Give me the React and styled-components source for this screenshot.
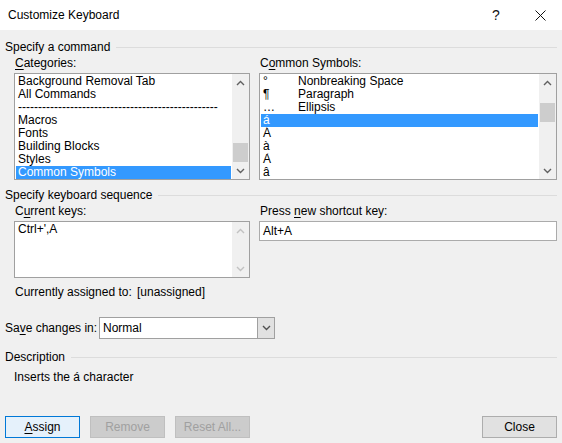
import React from "react";
import styled, { createGlobalStyle } from "styled-components";

const GlobalStyle = createGlobalStyle`
  html, body {
    margin: 0;
    padding: 0;
  }
  body {
    background: #f0f0f0;
    font-family: "Segoe UI", "Liberation Sans", Arial, sans-serif;
    font-size: 12px;
    color: #000;
  }
`;

const Dialog = styled.div`
  width: 562px;
  height: 443px;
  background: #f0f0f0;
  display: flex;
  flex-direction: column;
  overflow: hidden;
`;

const TitleBar = styled.div`
  height: 30px;
  flex-shrink: 0;
  background: #fff;
  display: flex;
  align-items: center;
  padding-left: 8px;
`;

const Title = styled.div`
  flex: 1;
  color: #000;
`;

const TitleButton = styled.div`
  width: 44px;
  height: 30px;
  display: flex;
  align-items: center;
  justify-content: center;
  font-size: 14px;
  color: #111;
`;

const Body = styled.div`
  flex: 1;
  display: flex;
  flex-direction: column;
  padding: 9px 5px 0;
`;

const GroupHeader = styled.div`
  display: flex;
  align-items: center;
  gap: 6px;
  height: 16px;
  line-height: 16px;
  margin-top: ${(p) => p.$top || 0}px;

  &::after {
    content: "";
    flex: 1;
    height: 1px;
    background: #dcdcdc;
  }
`;

const Columns = styled.div`
  display: grid;
  grid-template-columns: 236px 298px;
  column-gap: 9px;
  padding-left: 9px;
`;

const Field = styled.div`
  display: flex;
  flex-direction: column;
`;

const Label = styled.div`
  height: 15px;
  line-height: 15px;
  margin-top: 1px;
  margin-bottom: 2px;
  padding-left: 1px;

  u {
    text-decoration: underline;
    text-underline-offset: 2px;
  }
`;

const ListBox = styled.div`
  height: ${(p) => p.$height}px;
  box-sizing: border-box;
  border: 1px solid #a0a0a0;
  background: #fff;
  display: flex;
`;

const Items = styled.div`
  flex: 1;
  padding: 1px;
  overflow: hidden;
`;

const Row = styled.div`
  height: 13px;
  line-height: 13px;
  padding-left: 2px;
  white-space: nowrap;
  overflow: hidden;
  background: ${(p) => (p.$selected ? "#3399ff" : "transparent")};
  color: ${(p) => (p.$selected ? "#fff" : "#000")};
`;

const SymbolRow = styled(Row)`
  display: grid;
  grid-template-columns: 35px 1fr;
`;

const ScrollBar = styled.div`
  width: 17px;
  flex-shrink: 0;
  background: #f0f0f0;
  display: flex;
  flex-direction: column;
`;

const ScrollArrow = styled.div`
  height: 17px;
  display: flex;
  align-items: center;
  justify-content: center;
`;

const Track = styled.div`
  flex: 1;
  display: flex;
  flex-direction: column;
`;

const Thumb = styled.div`
  width: 15px;
  margin-left: 1px;
  height: 19px;
  background: #cdcdcd;
`;

const TextInput = styled.div`
  height: 20px;
  box-sizing: border-box;
  border: 1px solid #ababab;
  background: #fff;
  line-height: 18px;
  padding-left: 3px;
`;

const InfoRow = styled.div`
  display: flex;
  height: 15px;
  line-height: 15px;
  margin-top: 7px;
  padding-left: 10px;
`;

const InfoLabel = styled.span`
  width: 122px;
`;

const SaveRow = styled.div`
  display: flex;
  align-items: center;
  margin-top: 17px;

  u {
    text-decoration: underline;
    text-underline-offset: 2px;
  }
`;

const SaveLabel = styled.div`
  width: 94px;
`;

const Combo = styled.div`
  width: 176px;
  height: 22px;
  box-sizing: border-box;
  border: 1px solid #a0a0a0;
  background: #fff;
  display: flex;
`;

const ComboValue = styled.div`
  flex: 1;
  line-height: 20px;
  padding-left: 3px;
`;

const ComboButton = styled.div`
  width: 16px;
  background: #e1e1e1;
  border-left: 1px solid #a0a0a0;
  display: flex;
  align-items: center;
  justify-content: center;
`;

const Description = styled.div`
  height: 15px;
  line-height: 15px;
  margin-top: 5px;
  padding-left: 9px;
`;

const Footer = styled.div`
  margin-top: auto;
  display: flex;
  gap: 10px;
  padding-bottom: 5px;
`;

const Button = styled.div`
  width: 75px;
  height: 22px;
  box-sizing: border-box;
  display: flex;
  align-items: center;
  justify-content: center;
  border: 1px solid
    ${(p) => (p.$default ? "#0078d7" : p.$disabled ? "#bfbfbf" : "#adadad")};
  background: ${(p) =>
    p.$default ? "#e5f1fb" : p.$disabled ? "#cccccc" : "#e1e1e1"};
  color: ${(p) => (p.$disabled ? "#a0a0a0" : "#000")};
  margin-left: ${(p) => (p.$push ? "auto" : "0")};

  u {
    text-decoration: underline;
    text-underline-offset: 2px;
  }
`;

function Chevron({ up, color = "#606060" }) {
  return (
    <svg width="9" height="6" viewBox="0 0 9 6">
      <polyline
        points={up ? "1,5 4.5,1.5 8,5" : "1,1 4.5,4.5 8,1"}
        fill="none"
        stroke={color}
        strokeWidth="1.4"
      />
    </svg>
  );
}

function VScroll({ thumbTop, disabled }) {
  const color = disabled ? "#c2c2c2" : "#606060";
  return (
    <ScrollBar>
      <ScrollArrow>
        <Chevron up color={color} />
      </ScrollArrow>
      <Track>
        {thumbTop != null && <Thumb style={{ marginTop: thumbTop }} />}
      </Track>
      <ScrollArrow>
        <Chevron color={color} />
      </ScrollArrow>
    </ScrollBar>
  );
}

const categories = [
  "Background Removal Tab",
  "All Commands",
  "-".repeat(50),
  "Macros",
  "Fonts",
  "Building Blocks",
  "Styles",
  "Common Symbols",
];

const symbols = [
  ["°", "Nonbreaking Space"],
  ["¶", "Paragraph"],
  ["…", "Ellipsis"],
  ["á", ""],
  ["Á", ""],
  ["à", ""],
  ["À", ""],
  ["â", ""],
];

export default function App() {
  return (
    <>
      <GlobalStyle />
      <Dialog>
        <TitleBar>
          <Title>Customize Keyboard</Title>
          <TitleButton>?</TitleButton>
          <TitleButton>
            <svg width="11" height="11" viewBox="0 0 11 11">
              <path d="M0.5 0.5 L10.5 10.5 M10.5 0.5 L0.5 10.5" stroke="#111" strokeWidth="1" />
            </svg>
          </TitleButton>
        </TitleBar>
        <Body>
          <GroupHeader>Specify a command</GroupHeader>
          <Columns>
            <Field>
              <Label>
                <u>C</u>ategories:
              </Label>
              <ListBox $height={107}>
                <Items>
                  {categories.map((c, i) => (
                    <Row key={i} $selected={c === "Common Symbols"}>
                      {c}
                    </Row>
                  ))}
                </Items>
                <VScroll thumbTop={52} />
              </ListBox>
            </Field>
            <Field>
              <Label>
                C<u>o</u>mmon Symbols:
              </Label>
              <ListBox $height={107}>
                <Items>
                  {symbols.map(([s, n], i) => (
                    <SymbolRow key={i} $selected={i === 3}>
                      <span>{s}</span>
                      <span>{n}</span>
                    </SymbolRow>
                  ))}
                </Items>
                <VScroll thumbTop={12} />
              </ListBox>
            </Field>
          </Columns>

          <GroupHeader $top={7}>Specify keyboard sequence</GroupHeader>
          <Columns>
            <Field>
              <Label>
                C<u>u</u>rrent keys:
              </Label>
              <ListBox $height={57}>
                <Items>
                  <Row>Ctrl+',A</Row>
                </Items>
                <VScroll disabled />
              </ListBox>
            </Field>
            <Field>
              <Label>
                Press <u>n</u>ew shortcut key:
              </Label>
              <TextInput>Alt+A</TextInput>
            </Field>
          </Columns>
          <InfoRow>
            <InfoLabel>Currently assigned to:</InfoLabel>
            <span>[unassigned]</span>
          </InfoRow>

          <SaveRow>
            <SaveLabel>
              Sa<u>v</u>e changes in:
            </SaveLabel>
            <Combo>
              <ComboValue>Normal</ComboValue>
              <ComboButton>
                <Chevron color="#505050" />
              </ComboButton>
            </Combo>
          </SaveRow>

          <GroupHeader $top={10}>Description</GroupHeader>
          <Description>Inserts the á character</Description>

          <Footer>
            <Button $default>
              <u>A</u>ssign
            </Button>
            <Button $disabled>Remove</Button>
            <Button $disabled>Reset All...</Button>
            <Button $push>Close</Button>
          </Footer>
        </Body>
      </Dialog>
    </>
  );
}
